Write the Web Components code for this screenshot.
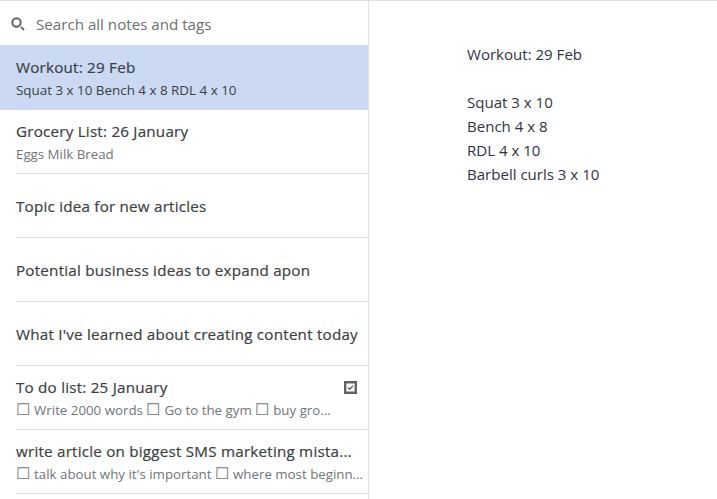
<!DOCTYPE html>
<html>
<head>
<meta charset="utf-8">
<style>
  html, body { margin: 0; height: 100%; overflow: hidden; background: #fff; }
  body { font-family: "Open Sans", "Noto Sans", sans-serif; }
</style>
</head>
<body>
<notes-app>
  <notes-sidebar slot="sidebar">
    <search-box placeholder="Search all notes and tags"></search-box>
    <note-row title-text="Workout: 29 Feb" snippet="Squat 3 x 10 Bench 4 x 8 RDL 4 x 10" selected></note-row>
    <note-row title-text="Grocery List: 26 January" snippet="Eggs Milk Bread"></note-row>
    <note-row title-text="Topic idea for new articles"></note-row>
    <note-row title-text="Potential business ideas to expand apon"></note-row>
    <note-row title-text="What I've learned about creating content today"></note-row>
    <note-row title-text="To do list: 25 January" snippet="☐ Write 2000 words ☐ Go to the gym ☐ buy gro..." checklist></note-row>
    <note-row title-text="write article on biggest SMS marketing mista..." snippet="☐ talk about why it's important ☐ where most beginn..."></note-row>
  </notes-sidebar>
  <note-editor slot="editor">
    <div>Workout: 29 Feb</div>
    <div>&nbsp;</div>
    <div>Squat 3 x 10</div>
    <div>Bench 4 x 8</div>
    <div>RDL 4 x 10</div>
    <div>Barbell curls 3 x 10</div>
  </note-editor>
</notes-app>

<script>
class NotesApp extends HTMLElement {
  constructor() {
    super();
    this.attachShadow({ mode: "open" }).innerHTML = `
      <style>
        :host { display: flex; height: 100vh; box-sizing: border-box; border-top: 1px solid #e0e0e0; }
      </style>
      <slot name="sidebar"></slot>
      <slot name="editor"></slot>
    `;
  }
}

class NotesSidebar extends HTMLElement {
  constructor() {
    super();
    this.attachShadow({ mode: "open" }).innerHTML = `
      <style>
        :host { display: block; width: 369px; flex: none; box-sizing: border-box; border-right: 1px solid #e0e0e0; overflow: hidden; }
      </style>
      <slot></slot>
    `;
  }
}

class SearchBox extends HTMLElement {
  constructor() {
    super();
    this.attachShadow({ mode: "open" }).innerHTML = `
      <style>
        :host { display: flex; align-items: center; height: 44px; padding: 1px 0 0 11px; box-sizing: border-box; gap: 11px; color: #6b6f73; font-size: 15.15px; }
        svg { flex: none; display: block; margin-top: 1px; }
      </style>
      <svg width="14" height="14" viewBox="0 0 14 14" fill="none" stroke="#5f6368">
        <circle cx="5.5" cy="5.5" r="4.2" stroke-width="2"/>
        <path d="M10 10 L13 13" stroke-width="1.8"/>
      </svg>
      <span>${this.getAttribute("placeholder") || ""}</span>
    `;
  }
}

class NoteRow extends HTMLElement {
  constructor() {
    super();
    const title = this.getAttribute("title-text") || "";
    const snippet = (this.getAttribute("snippet") || "").replace(/☐/g, '<span class="tick">☐</span>');
    const check = this.hasAttribute("checklist") ? `
      <svg class="check" width="13" height="13" viewBox="0 0 13 13">
        <path fill="#5f6368" fill-rule="evenodd" d="M0 0H13V13H0Z M2.4 2.4V10.6H10.6V2.4Z"/>
        <path fill="none" stroke="#5f6368" stroke-width="1.4" d="M4 6.6 L5.7 8.2 L9 4.8"/>
      </svg>` : "";
    this.attachShadow({ mode: "open" }).innerHTML = `
      <style>
        :host { display: block; height: 64px; padding-left: 16px; box-sizing: border-box; }
        :host([selected]) { height: 65px; background: #ccd9f2; }
        .box { height: 100%; box-sizing: border-box; border-bottom: 1px solid #e0e0e0; display: flex; flex-direction: column; justify-content: center; gap: 2px; padding-right: 5px; }
        :host([selected]) .box { border-bottom: 0; }
        .head { display: flex; align-items: center; justify-content: space-between; gap: 8px; }
        .title { font-size: 15.2px; font-weight: 400; letter-spacing: .22px; -webkit-text-stroke: .2px #3c4043; line-height: 22px; color: #3c4043; white-space: nowrap; }
        .snippet { font-size: 13.3px; line-height: 20px; color: #70757a; white-space: nowrap; }
        .tick { font-size: 15.5px; line-height: 1; letter-spacing: .6px; }
        :host([selected]) .snippet { color: #3c4043; font-size: 13.4px; }
        .check { flex: none; margin: 2px 6px 0 0; }
      </style>
      <div class="box">
        <div class="head"><span class="title">${title}</span>${check}</div>
        ${snippet ? `<div class="snippet">${snippet}</div>` : ""}
      </div>
    `;
  }
}

class NoteEditor extends HTMLElement {
  constructor() {
    super();
    this.attachShadow({ mode: "open" }).innerHTML = `
      <style>
        :host { display: block; flex: 1; padding: 41px 0 0 98px; font-size: 15.05px; line-height: 24px; color: #2f3542; }
      </style>
      <slot></slot>
    `;
  }
}

customElements.define("notes-app", NotesApp);
customElements.define("notes-sidebar", NotesSidebar);
customElements.define("search-box", SearchBox);
customElements.define("note-row", NoteRow);
customElements.define("note-editor", NoteEditor);
</script>
</body>
</html>
